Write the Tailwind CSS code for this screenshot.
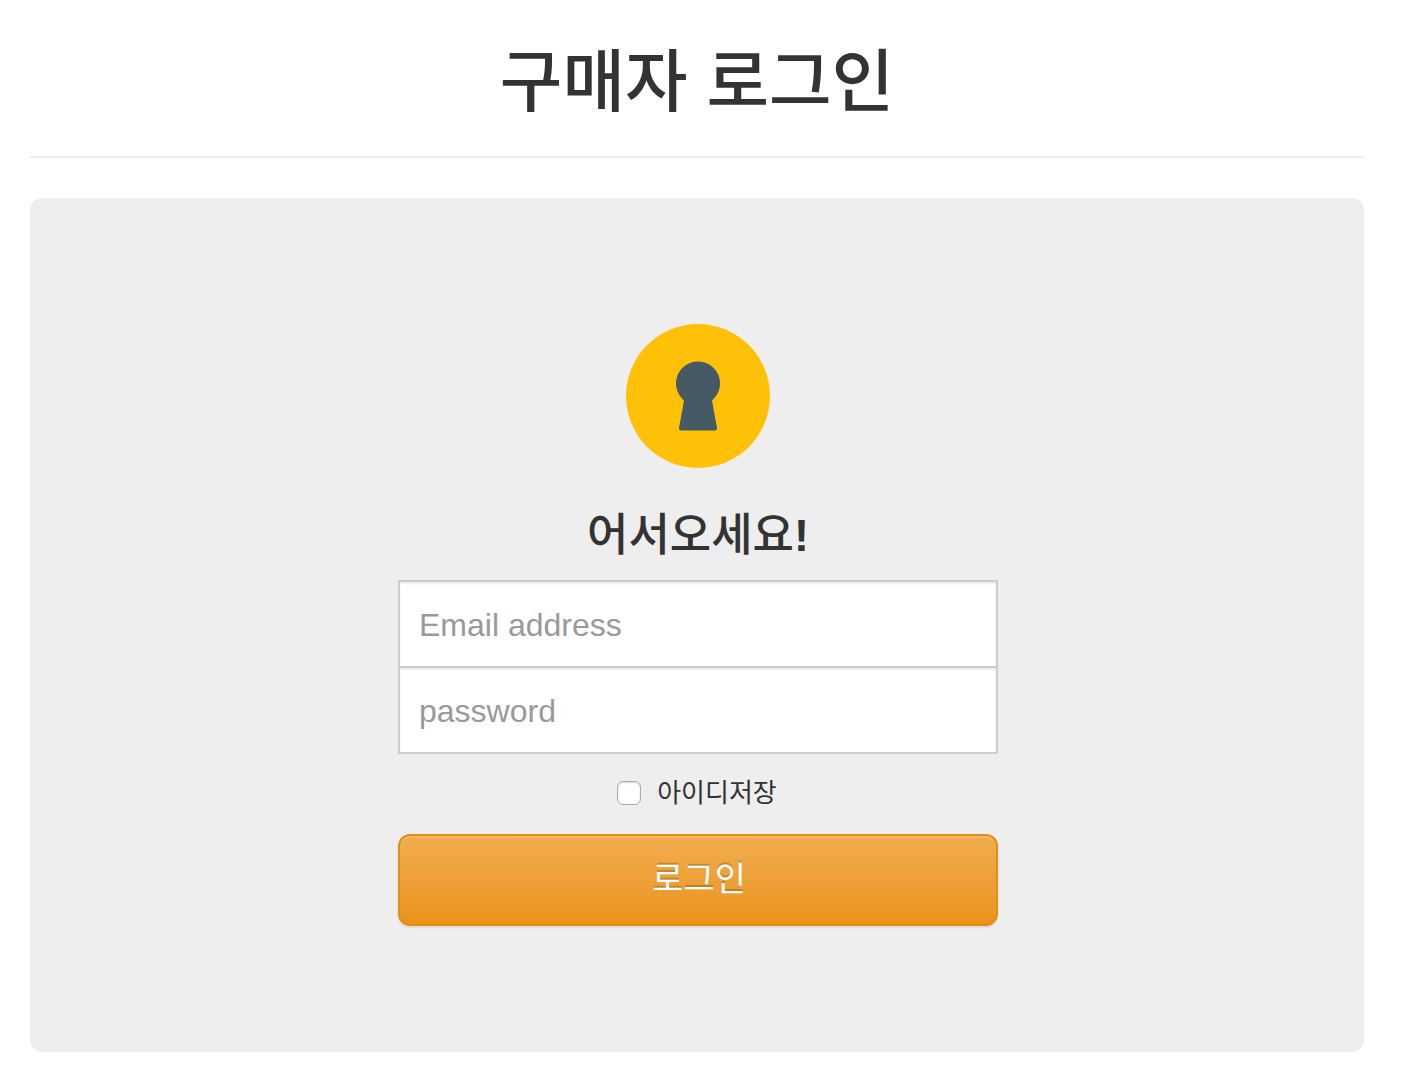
<!DOCTYPE html>
<html lang="ko">
<head>
<meta charset="utf-8">
<meta name="viewport" content="width=device-width, initial-scale=1">
<title>구매자 로그인</title>
<script src="https://cdn.jsdelivr.net/npm/@tailwindcss/browser@4"></script>
</head>
<body class="bg-white pt-5 pr-[38px] pb-8 pl-[30px] font-['Liberation_Sans','Noto_Sans_CJK_KR',sans-serif] text-[#333]">
<header class="border-b-2 border-[#eee] pt-0.5 pb-3.5">
  <h1 class="text-center text-[68px] leading-[120px] font-medium">구매자 로그인</h1>
</header>
<main class="mt-10 flex flex-col items-center rounded-xl bg-[#eee] pr-4 pl-[18px] py-[126px]">
  <svg class="size-36" viewBox="0 0 144 144" aria-hidden="true">
    <circle cx="72" cy="72" r="72" fill="#ffc107"/>
    <path fill="#455a64" d="M72 37.500a22 22 0 0 0-14 39L53 104q0 2.500 2.500 2.500h33q2.500 0 2.500-2.500L86 76.500a22 22 0 0 0-14-39z"/>
  </svg>
  <h2 class="mt-[38px] text-[45px] leading-[60px] font-medium">어서오세요<span class="font-bold">!</span></h2>
  <form class="mt-3.5 flex w-full max-w-[600px] flex-col">
    <input type="email" aria-label="Email address" placeholder="Email address" class="h-[88px] border-2 border-[#ccc] bg-white px-[19px] pt-0.5 text-[32px] shadow-[inset_0_2px_2px_rgba(0,0,0,0.075)] placeholder:text-[#999]">
    <input type="password" aria-label="password" placeholder="password" class="-mt-0.5 h-[88px] border-2 border-[#ccc] bg-white px-[19px] pt-0.5 text-[32px] shadow-[inset_0_2px_2px_rgba(0,0,0,0.075)] placeholder:text-[#999]">
    <label class="mt-5 flex h-[38px] items-center justify-center gap-4 pr-0.5 text-[26px] leading-10">
      <input type="checkbox" class="size-6 appearance-none rounded-md border border-[#aaa] bg-white shadow-[inset_0_1px_2px_rgba(0,0,0,0.15)]">아이디저장
    </label>
    <button type="submit" class="mt-[22px] h-[92px] rounded-xl border-2 border-[#e38d13] bg-linear-to-b from-[#f0ad4e] to-[#eb9316] pr-2 pb-0.5 pl-2.5 text-[34px] font-normal text-white shadow-[inset_0_2px_0_rgba(255,255,255,0.15),0_2px_2px_rgba(0,0,0,0.075)] text-shadow-[0_-2px_0_rgba(0,0,0,0.2)]">로그인</button>
  </form>
</main>
</body>
</html>
